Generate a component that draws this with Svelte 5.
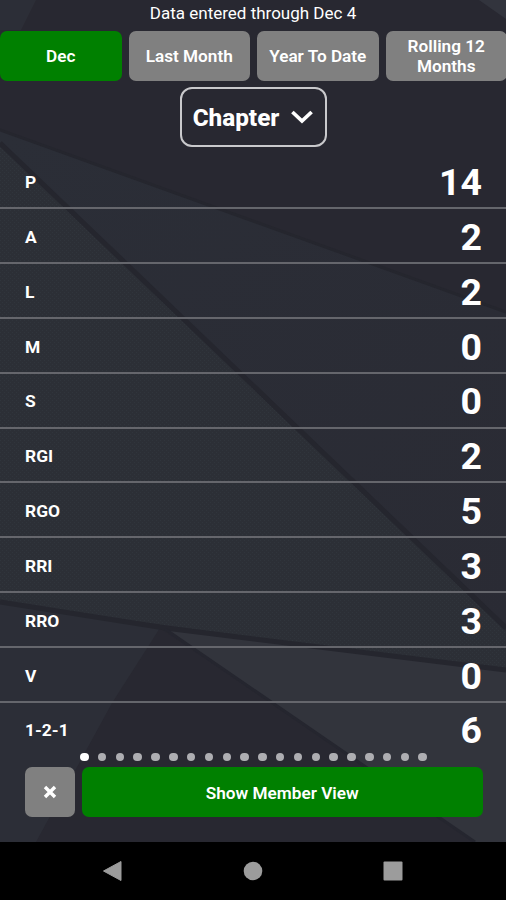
<script>
  const ranges = ["Dec", "Last Month", "Year To Date", "Rolling 12 Months"];
  const stats = [
    { label: "P", value: 14 },
    { label: "A", value: 2 },
    { label: "L", value: 2 },
    { label: "M", value: 0 },
    { label: "S", value: 0 },
    { label: "RGI", value: 2 },
    { label: "RGO", value: 5 },
    { label: "RRI", value: 3 },
    { label: "RRO", value: 3 },
    { label: "V", value: 0 },
    { label: "1-2-1", value: 6 },
  ];
  const pages = Array(20);

  let range = $state("Dec");
  let page = $state(0);
</script>

<div class="screen">
  <svg class="backdrop" viewBox="0 0 506 842" preserveAspectRatio="none" aria-hidden="true">
    <defs>
      <pattern id="mesh" width="4" height="4" patternUnits="userSpaceOnUse">
        <path d="M0 0h1v1h-1zM2 2h1v1h-1z" fill="#363b42" opacity=".45" />
      </pattern>
      <linearGradient id="shard" x1="0" y1="0" x2="1" y2="1">
        <stop offset="0" stop-color="#2b2e37" />
        <stop offset="1" stop-color="#2a2b34" />
      </linearGradient>
    </defs>
    <rect width="506" height="842" fill="#282831" />
    <path d="M0 0H36L21 30H0z" fill="#2c2e37" />
    <path d="M479 0H506V19z" fill="#32343d" />
    <path d="M0 130L506 312V640L0 145z" fill="url(#shard)" />
    <path d="M0 130L506 312" stroke="#25262e" stroke-width="3" />
    <path d="M0 142L506 631V671L0 603z" fill="#2c2f36" />
    <path d="M0 142L506 631V671L0 603z" fill="url(#mesh)" />
    <path d="M0 603L160 628L37 842H0z" fill="#2c2e37" />
    <path d="M165 628L506 671V842H475z" fill="#32343c" />
    <path d="M160 628L475 842H36L112 703z" fill="#282831" />
    <path d="M0 143L506 628" stroke="#25262e" stroke-width="5" fill="none" />
    <path d="M0 602L165 628L506 670" stroke="#25262e" stroke-width="5" fill="none" />
    <path d="M165 629L475 842" stroke="#25262f" stroke-width="3" />
  </svg>

  <div class="main">
    <p class="updated">Data entered through Dec 4</p>

    <div class="ranges">
      {#each ranges as name}
        <button class:active={range === name} onclick={() => (range = name)}>{name}</button>
      {/each}
    </div>

    <button class="scope">
      <span>Chapter</span>
      <svg width="24" height="16" viewBox="0 0 24 16">
        <path d="M2.4 3L12 12L21.6 3" fill="none" stroke="#fff" stroke-width="3.7" />
      </svg>
    </button>

    <div class="stats">
      {#each stats as stat}
        <div class="stat">
          <span class="label">{stat.label}</span>
          <span class="value">{stat.value}</span>
        </div>
      {/each}
    </div>

    <div class="dots">
      {#each pages as _, i}
        <span class="dot" class:current={i === page}></span>
      {/each}
    </div>

    <div class="actions">
      <button class="close" aria-label="Close">
        <svg width="14" height="14" viewBox="0 0 14 14">
          <path d="M2 2L12 12M12 2L2 12" stroke="#fff" stroke-width="3.4" />
        </svg>
      </button>
      <button class="member">Show Member View</button>
    </div>
  </div>

  <nav class="system">
    <svg width="20" height="22" viewBox="0 0 20 22">
      <path d="M19 1.5V20.5L1.5 11z" fill="#9c9c9c" stroke="#9c9c9c" stroke-linejoin="round" />
    </svg>
    <svg width="20" height="20" viewBox="0 0 20 20">
      <circle cx="10" cy="10" r="9.3" fill="#9c9c9c" />
    </svg>
    <svg width="20" height="20" viewBox="0 0 20 20">
      <rect x=".5" y=".5" width="19" height="19" rx="1" fill="#9c9c9c" />
    </svg>
  </nav>
</div>

<style>
  :global(body) {
    background: #000;
  }

  .screen {
    position: relative;
    width: 506px;
    height: 900px;
    overflow: hidden;
    display: flex;
    flex-direction: column;
    font-family: Roboto, "Liberation Sans", sans-serif;
    color: #fff;
  }

  .backdrop {
    position: absolute;
    top: 0;
    left: 0;
    width: 506px;
    height: 842px;
  }

  .main {
    position: relative;
    height: 842px;
    display: flex;
    flex-direction: column;
  }

  button {
    border: 0;
    padding: 0;
    border-radius: 7px;
    background: #808080;
    color: #fff;
    font-family: inherit;
    font-size: 17.2px;
    font-weight: 600;
    line-height: 20px;
  }

  .updated {
    margin: 0;
    height: 30.5px;
    line-height: 27px;
    font-size: 17px;
    text-align: center;
  }

  .ranges {
    display: grid;
    grid-template-columns: repeat(4, 1fr);
    gap: 7px;
    width: 507px;
    height: 50px;
  }

  .ranges button:last-child {
    padding: 0 14px;
  }

  .ranges .active {
    background: #008000;
  }

  .scope {
    display: flex;
    align-items: center;
    justify-content: center;
    gap: 11px;
    box-sizing: border-box;
    align-self: center;
    width: 147px;
    height: 60px;
    margin-top: 6.5px;
    padding-left: 1px;
    border: 2px solid #c9c9cc;
    border-radius: 12px;
    background: none;
    font-size: 24.3px;
    font-weight: 800;
  }

  .scope span {
    padding-top: 2px;
  }

  .stats {
    margin-top: 7.4px;
    height: 597.6px;
  }

  .stat {
    display: flex;
    align-items: center;
    justify-content: space-between;
    box-sizing: border-box;
    height: 54.85px;
    padding: 2.4px 24px 0 25px;
    border-bottom: 2px solid #65666c;
  }

  /* the pager sits tight under the last row */
  .stat:last-child {
    height: 49.1px;
    padding-top: 6px;
    border-bottom: 0;
  }

  .label {
    font-size: 17.4px;
    font-weight: 700;
  }

  .value {
    font-size: 37.4px;
    font-weight: 700;
    line-height: 40px;
  }

  .dots {
    display: flex;
    justify-content: space-between;
    align-items: center;
    height: 10px;
    margin-bottom: 5.5px;
    padding: 0 79px 0 80px;
  }

  .dot {
    width: 8.5px;
    height: 8.5px;
    border-radius: 50%;
    background: #aeaeb2;
  }

  .dot.current {
    background: #fff;
  }

  .actions {
    display: flex;
    gap: 7px;
    height: 50px;
    padding: 0 23px 0 25px;
  }

  .close {
    display: flex;
    align-items: center;
    justify-content: center;
    width: 49.5px;
  }

  .member {
    flex: 1;
    padding-top: 1px;
    background: #008000;
  }

  .system {
    position: relative;
    display: flex;
    align-items: center;
    justify-content: space-between;
    height: 58px;
    padding: 0 103px 0 102px;
    box-sizing: border-box;
    background: #000;
  }
</style>
